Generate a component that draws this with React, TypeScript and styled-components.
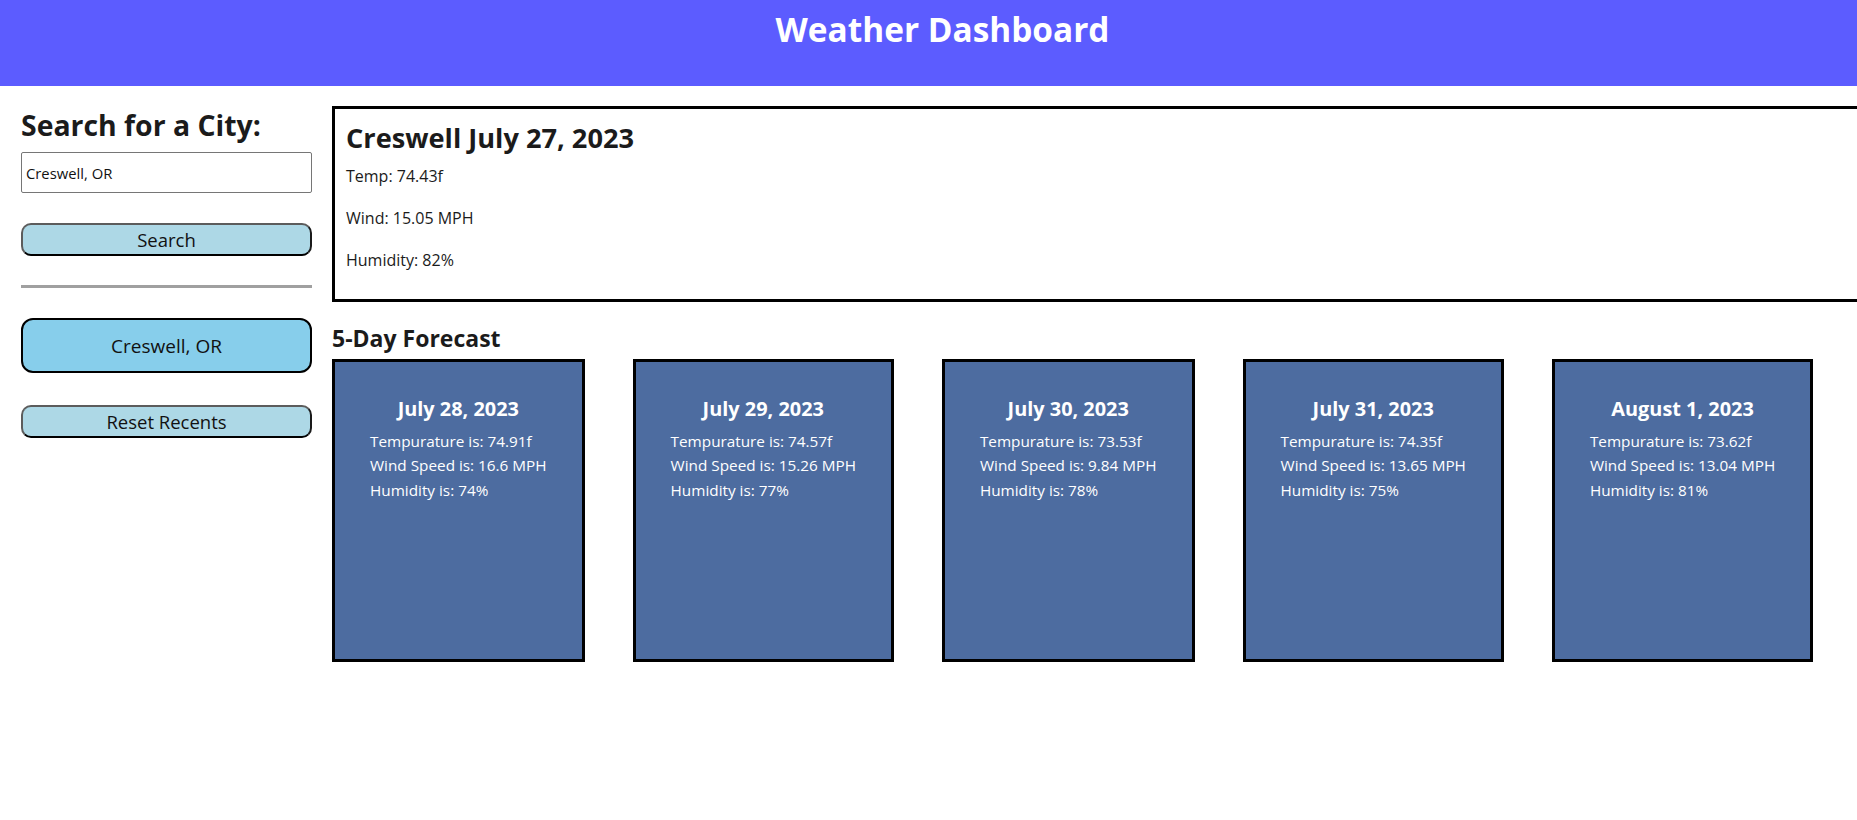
import styled, { createGlobalStyle } from "styled-components";

const GlobalStyle = createGlobalStyle`
  html, body {
    margin: 0;
    padding: 0;
    overflow-x: hidden;
    background: #ffffff;
    font-family: "Open Sans", "Noto Sans", sans-serif;
    color: #1b1b1b;
  }
`;

const Header = styled.header`
  height: 86px;
  background: rgb(92, 92, 255);
  padding: 6px 0 0 28px;
  box-sizing: border-box;
`;
const HeaderTitle = styled.h1`
  margin: 0;
  text-align: center;
  color: #ffffff;
  font-size: 33.4px;
  font-weight: 700;
`;
const Page = styled.div`
  display: flex;
  align-items: flex-start;
  gap: 20px;
  padding: 20px 0 0 21px;
`;
const Sidebar = styled.aside`
  width: 291px;
  flex-shrink: 0;
  display: flex;
  flex-direction: column;
`;
const SideTitle = styled.h2`
  margin: 0 0 8px;
  font-size: 28.4px;
  font-weight: 700;
`;
const CityInput = styled.input`
  height: 41px;
  box-sizing: border-box;
  width: 100%;
  border: 1px solid #767676;
  border-radius: 2px;
  padding: 0 4px;
  font-family: inherit;
  font-size: 14.8px;
  color: #111;
`;
const PillButton = styled.button<{ $tall?: boolean; $gap: number }>`
  margin-top: ${({ $gap }) => $gap}px;
  height: ${({ $tall }) => ($tall ? 55 : 33)}px;
  box-sizing: border-box;
  width: 100%;
  border: 2px solid;
  border-color: ${({ $tall }) =>
    $tall ? "#000" : "#5c5c5c #1a1a1a #000 #5c5c5c"};
  border-radius: ${({ $tall }) => ($tall ? 12 : 10)}px;
  background: ${({ $tall }) => ($tall ? "#87ceeb" : "#add8e6")};
  font-family: inherit;
  font-size: ${({ $tall }) => ($tall ? 19 : 18.5)}px;
  color: #111;
  padding: 0;
  cursor: pointer;
`;
const Divider = styled.div`
  margin-top: 29px;
  height: 3px;
  background: #a0a0a0;
`;
const Main = styled.main`
  flex: 1;
  min-width: 0;
`;
const CurrentBox = styled.section`
  width: 1580px;
  height: 196px;
  box-sizing: border-box;
  border: 3px solid #000;
  padding: 10px 11px 8px;
`;
const CurrentTitle = styled.h2`
  margin: 0 0 9px;
  font-size: 27.2px;
  font-weight: 700;
`;
const Stat = styled.p`
  margin: 0 0 20px;
  font-size: 16px;
`;
const ForecastTitle = styled.h3`
  margin: 20px 0 4.5px;
  font-size: 23px;
  font-weight: 700;
`;
const CardRow = styled.div`
  display: flex;
  gap: 48px;
  align-items: flex-start;
`;
const Card = styled.div`
  height: 303px;
  box-sizing: border-box;
  border: 3px solid #000;
  background: #4d6ca0;
  color: #ffffff;
  padding: 33px 35px 0;
`;
const CardDate = styled.h4`
  margin: 0 0 7px;
  text-align: center;
  font-size: 19.9px;
  font-weight: 700;
`;
const CardLine = styled.div`
  font-size: 15.3px;
  line-height: 24.5px;
  white-space: nowrap;
`;

const forecast = [
  { date: "July 28, 2023", temp: "74.91", wind: "16.6", hum: 74 },
  { date: "July 29, 2023", temp: "74.57", wind: "15.26", hum: 77 },
  { date: "July 30, 2023", temp: "73.53", wind: "9.84", hum: 78 },
  { date: "July 31, 2023", temp: "74.35", wind: "13.65", hum: 75 },
  { date: "August 1, 2023", temp: "73.62", wind: "13.04", hum: 81 },
];

const App = () => {
  return (
    <>
      <GlobalStyle />
      <Header>
        <HeaderTitle>Weather Dashboard</HeaderTitle>
      </Header>
      <Page>
        <Sidebar>
          <SideTitle>Search for a City:</SideTitle>
          <CityInput defaultValue="Creswell, OR" />
          <PillButton $gap={30}>Search</PillButton>
          <Divider />
          <PillButton $tall $gap={30}>
            Creswell, OR
          </PillButton>
          <PillButton $gap={32}>Reset Recents</PillButton>
        </Sidebar>
        <Main>
          <CurrentBox>
            <CurrentTitle>Creswell July 27, 2023</CurrentTitle>
            <Stat>Temp: 74.43f</Stat>
            <Stat>Wind: 15.05 MPH</Stat>
            <Stat>Humidity: 82%</Stat>
          </CurrentBox>
          <ForecastTitle>5-Day Forecast</ForecastTitle>
          <CardRow>
            {forecast.map((day) => (
              <Card key={day.date}>
                <CardDate>{day.date}</CardDate>
                <CardLine>Tempurature is: {day.temp}f</CardLine>
                <CardLine>Wind Speed is: {day.wind} MPH</CardLine>
                <CardLine>Humidity is: {day.hum}%</CardLine>
              </Card>
            ))}
          </CardRow>
        </Main>
      </Page>
    </>
  );
};

export default App;
